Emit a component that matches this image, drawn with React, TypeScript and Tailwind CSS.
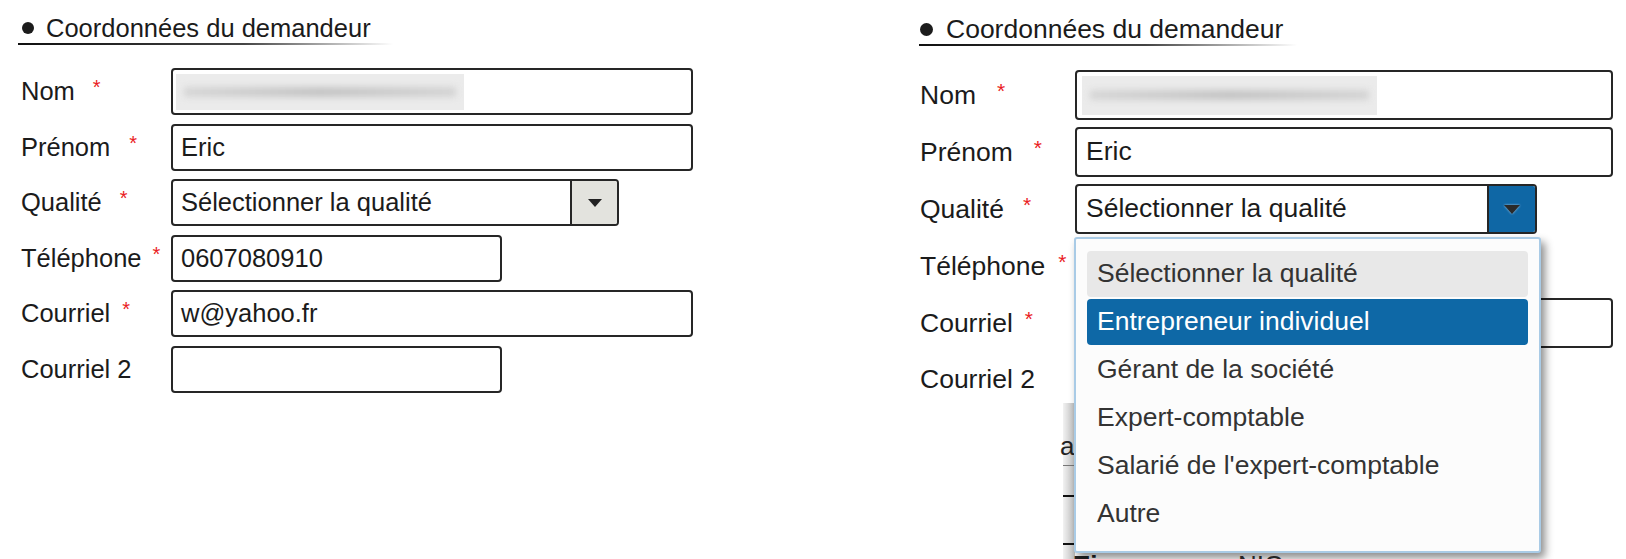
import React from "react"

type Variant = {
  panel: string
  head: string
  bullet: string
  underline: string
  rows: string
  row: string
  label: string
  star: string
  field: string
  long: string
  short: string
  select: string
  btn: string
  tri: string
  blur: string
}

const small: Variant = {
  panel: "w-[866px] pl-[18px] pt-[14px] text-[25.5px]",
  head: "gap-[12px] pl-[4px] leading-[28px]",
  bullet: "w-[12px] h-[12px]",
  underline: "w-[375px] mt-[1px]",
  rows: "mt-[23px] gap-[8.5px]",
  row: "h-[47px]",
  label: "w-[153px] pl-[3px]",
  star: "text-[20px]",
  field: "pl-[8px]",
  long: "w-[522px]",
  short: "w-[331px]",
  select: "w-[448px]",
  btn: "w-[47px] bg-[#e3e3de]",
  tri: "border-l-[7px] border-r-[7px] border-t-[8px] border-t-[#222]",
  blur: "ml-[3px] w-[288px] h-[36px]",
}

const big: Variant = {
  panel: "relative w-[760px] pl-[53px] pt-[15px] text-[26.5px]",
  head: "gap-[13px] pl-[1px] leading-[28px]",
  bullet: "w-[13px] h-[13px]",
  underline: "w-[378px] mt-[1px]",
  rows: "mt-[24px] gap-[7px]",
  row: "h-[50px]",
  label: "w-[156px] pl-[1px]",
  star: "text-[21px]",
  field: "pl-[9px]",
  long: "w-[538px]",
  short: "w-[341px]",
  select: "w-[462px]",
  btn: "w-[48px] bg-[#0f67a5]",
  tri: "border-l-[8px] border-r-[8px] border-t-[9px] border-t-[#2a2a2a] drop-shadow-[0_0_1px_#a9d0f0]",
  blur: "ml-[5px] w-[295px] h-[39px]",
}

type Row = {
  label: string
  star?: [string, string] // marge avant l'astérisque : petit / grand
  kind: "long" | "short" | "select" | "blur"
  value?: string
}

const rows: Row[] = [
  { label: "Nom", star: ["ml-[18px]", "ml-[21px]"], kind: "blur" },
  { label: "Prénom", star: ["ml-[19px]", "ml-[21px]"], kind: "long", value: "Eric" },
  { label: "Qualité", star: ["ml-[18px]", "ml-[19px]"], kind: "select", value: "Sélectionner la qualité" },
  { label: "Téléphone", star: ["ml-[11px]", "ml-[13px]"], kind: "short", value: "0607080910" },
  { label: "Courriel", star: ["ml-[12px]", "ml-[12px]"], kind: "long", value: "w@yahoo.fr" },
  { label: "Courriel 2", kind: "short" },
]

const options = [
  "Sélectionner la qualité",
  "Entrepreneur individuel",
  "Gérant de la société",
  "Expert-comptable",
  "Salarié de l'expert-comptable",
  "Autre",
]

function Field({ row, v }: { row: Row; v: Variant }) {
  const box = "h-full border-2 border-[#262626] rounded-[4px] bg-white flex items-center"

  if (row.kind === "select") {
    return (
      <div className={`${box} ${v.select} overflow-hidden`}>
        <div className={`flex-1 ${v.field} whitespace-nowrap`}>{row.value}</div>
        <div className={`${v.btn} h-full border-l-2 border-[#262626] flex items-center justify-center`}>
          <div className={`w-0 h-0 border-l-transparent border-r-transparent ${v.tri}`} />
        </div>
      </div>
    )
  }

  if (row.kind === "blur") {
    // valeur masquée (floutée) dans la capture
    return (
      <div className={`${box} ${v.long}`}>
        <div className={`${v.blur} bg-[#ebebeb] flex flex-col justify-center overflow-hidden`}>
          <div className="h-[10px] mx-[8px] bg-linear-to-r from-[#d6d6d6] via-[#c4c4c4] to-[#d4d4d4] blur-[3px]" />
        </div>
      </div>
    )
  }

  return (
    <div className={`${box} ${row.kind === "long" ? v.long : v.short}`}>
      <div className={`${v.field} whitespace-nowrap`}>{row.value}</div>
    </div>
  )
}

function Form({ v, big: isBig }: { v: Variant; big?: boolean }) {
  return (
    <>
      <div className={`flex items-center ${v.head}`}>
        <span className={`${v.bullet} rounded-full bg-[#1c1c1c]`} />
        <span>Coordonnées du demandeur</span>
      </div>
      <div className={`h-[2px] bg-linear-to-r from-[#111] via-[#444] via-60% to-transparent ${v.underline}`} />

      <div className={`flex flex-col ${v.rows}`}>
        {rows.map((row) => (
          <div key={row.label} className={`flex items-center ${v.row}`}>
            <div className={`${v.label} whitespace-nowrap`}>
              {row.label}
              {row.star && (
                <span className={`${isBig ? row.star[1] : row.star[0]} ${v.star} text-[#ea1c24] align-[6px]`}>*</span>
              )}
            </div>
            <Field row={row} v={v} />
          </div>
        ))}
      </div>
    </>
  )
}

function Dropdown() {
  return (
    <div className="absolute left-[208px] top-[237px] z-10 w-[467px] h-[316px] bg-[#fcfcfc] border-2 border-[#a9cbe6] rounded-[3px] shadow-[4px_5px_8px_rgba(0,0,0,0.45)] px-[11px] pt-[12px] flex flex-col gap-[2px] text-[#333]">
      {options.map((o, i) => (
        <div
          key={o}
          className={`h-[46px] shrink-0 flex items-center pl-[10px] rounded-[4px] whitespace-nowrap ${
            i === 0 ? "bg-[#e8e8e8]" : i === 1 ? "bg-[#0e68a6] text-white" : ""
          }`}
        >
          {o}
        </div>
      ))}
    </div>
  )
}

export default function App() {
  return (
    <div className="w-[1626px] h-[559px] bg-white overflow-hidden flex items-start font-['Liberation_Sans',Arial,sans-serif] text-[#1b1b1b]">
      <div className={small.panel}>
        <Form v={small} />
      </div>

      <div className={`${big.panel} h-[559px]`}>
        <Form v={big} big />

        {/* restes de la page derrière la liste déroulante */}
        <div className="absolute left-[197px] top-[403px] w-[12px] h-[156px] bg-linear-to-r from-[#f2f2f2] to-[#bdbdbd]">
          <div className="absolute left-[-3px] top-[30px] text-[26px] leading-[26px] text-[#222]">a</div>
          <div className="absolute left-0 top-[62px] w-full h-px bg-[#777]" />
          <div className="absolute left-0 top-[92px] w-full h-[2px] bg-[#111]" />
          <div className="absolute left-0 top-[140px] w-full h-[2px] bg-[#111]" />
        </div>
        <div className="absolute left-[207px] top-[552px] text-[26px] leading-[26px] font-bold text-[#222]">Ei</div>
        <div className="absolute left-[372px] top-[552px] text-[26px] leading-[26px] text-[#333]">NIC</div>

        <Dropdown />
      </div>
    </div>
  )
}
